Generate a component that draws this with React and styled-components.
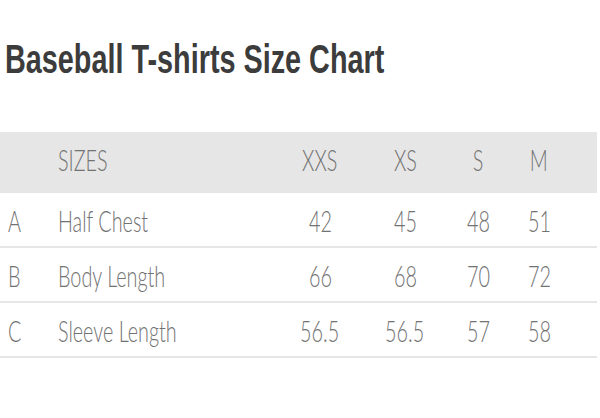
import styled, { createGlobalStyle } from "styled-components";

const GlobalStyle = createGlobalStyle`
  body {
    margin: 0;
    background: #ffffff;
  }
`;

const Page = styled.div`
  width: 600px;
  height: 418px;
  overflow: hidden;
  background: #ffffff;
`;

const Title = styled.h1`
  margin: 0;
  padding: 35px 0 0 5px;
  height: 132px;
  box-sizing: border-box;
  font-family: "Liberation Sans", Arial, sans-serif;
  font-weight: 700;
  font-size: 40px;
  line-height: 48px;
  color: #3c3c3c;
  white-space: nowrap;
`;

const Squeeze = styled.span`
  display: inline-block;
  transform: scaleX(${(p) => p.$scale});
  transform-origin: ${(p) => (p.$center ? "center" : "left")} center;
`;

const Table = styled.div`
  width: 597px;
  display: grid;
  grid-template-columns: 58px 222px 80px 90px 56px 66px 1fr;
  font-family: Lato, "Open Sans", sans-serif;
  font-weight: 300;
  font-size: 30px;
  color: #727272;
`;

const Row = styled.div`
  display: contents;
`;

const Cell = styled.div`
  height: ${(p) => (p.$head ? "61px" : "55px")};
  box-sizing: border-box;
  display: flex;
  align-items: center;
  justify-content: ${(p) => (p.$center ? "center" : "flex-start")};
  padding-left: ${(p) => (p.$pad ? `${p.$pad}px` : "0")};
  padding-bottom: ${(p) => (p.$head ? "8px" : "0")};
  background: ${(p) => (p.$head ? "#e6e6e6" : "transparent")};
  border-bottom: ${(p) => (p.$head ? "none" : "2px solid #e6e6e6")};
  white-space: nowrap;
`;

const sizes = ["XXS", "XS", "S", "M"];

const rows = [
  { key: "A", label: "Half Chest", values: ["42", "45", "48", "51"] },
  { key: "B", label: "Body Length", values: ["66", "68", "70", "72"] },
  { key: "C", label: "Sleeve Length", values: ["56.5", "56.5", "57", "58"] },
];

const SCALE = 0.66;

export default function App() {
  return (
    <Page>
      <GlobalStyle />
      <Title>
        <Squeeze $scale={0.72}>Baseball T-shirts Size Chart</Squeeze>
      </Title>
      <Table>
        <Row>
          <Cell $head />
          <Cell $head>
            <Squeeze $scale={SCALE}>SIZES</Squeeze>
          </Cell>
          {sizes.map((s) => (
            <Cell $head $center key={s}>
              <Squeeze $scale={SCALE} $center>
                {s}
              </Squeeze>
            </Cell>
          ))}
          <Cell $head />
        </Row>
        {rows.map((r) => (
          <Row key={r.key}>
            <Cell $pad={8}>
              <Squeeze $scale={SCALE}>{r.key}</Squeeze>
            </Cell>
            <Cell>
              <Squeeze $scale={SCALE}>{r.label}</Squeeze>
            </Cell>
            {r.values.map((v, i) => (
              <Cell $center key={i}>
                <Squeeze $scale={SCALE} $center>
                  {v}
                </Squeeze>
              </Cell>
            ))}
            <Cell />
          </Row>
        ))}
      </Table>
    </Page>
  );
}
